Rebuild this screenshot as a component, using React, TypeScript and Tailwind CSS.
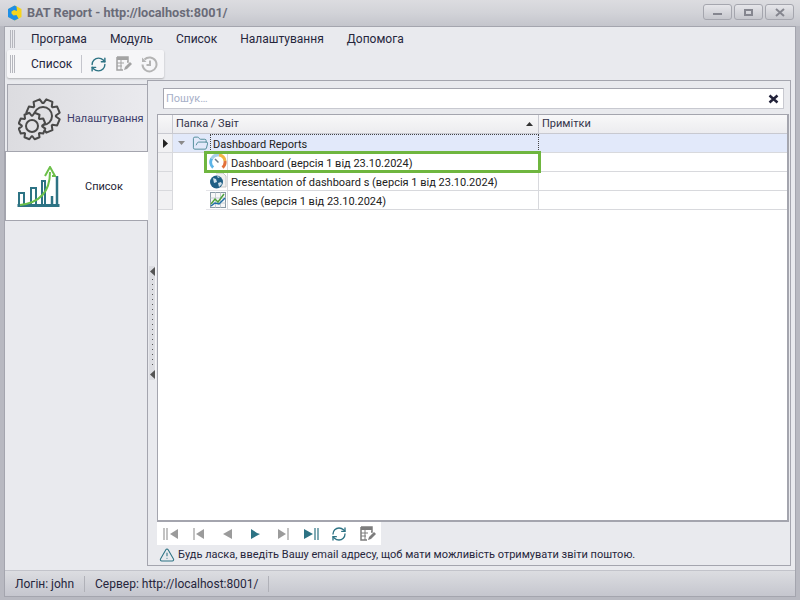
import React from "react";
import { RefreshCw, TriangleAlert, FolderOpen } from "lucide-react";

const font = { fontFamily: 'Roboto, "Open Sans", sans-serif' };

function Gear({ cx, cy, r, inner, fill = "none" }: { cx: number; cy: number; r: number; inner: number; fill?: string }) {
  const teeth = 8;
  const pts: string[] = [];
  const p = (rad: number, ang: number) => `${(cx + rad * Math.cos(ang)).toFixed(2)},${(cy + rad * Math.sin(ang)).toFixed(2)}`;
  for (let i = 0; i < teeth; i++) {
    const a = (i / teeth) * Math.PI * 2 + Math.PI / 8;
    const w = Math.PI / teeth;
    pts.push(p(r * 0.76, a - w * 0.9), p(r, a - w * 0.5), p(r, a + w * 0.5), p(r * 0.76, a + w * 0.9));
  }
  return (
    <g>
      <polygon points={pts.join(" ")} fill={fill} stroke="#4a4a4a" strokeWidth={2} strokeLinejoin="round" />
      <circle cx={cx} cy={cy} r={inner} fill="none" stroke="#4a4a4a" strokeWidth={2} />
    </g>
  );
}

function GearsIcon() {
  return (
    <svg width="44" height="44" viewBox="0 0 44 44" className="shrink-0">
      <Gear cx={25} cy={19} r={17} inner={9} />
      <Gear cx={14} cy={29} r={13.5} inner={6} fill="#e0e0e4" />
    </svg>
  );
}

function ChartIcon() {
  return (
    <svg width="44" height="42" viewBox="0 0 44 42" className="shrink-0">
      <g fill="none" stroke="#2d7384" strokeWidth="2">
        <path d="M2 38V27h5v11" />
        <path d="M14 38V22h5v16" />
        <path d="M25 38V15h3v23" />
        <path d="M40 10v28" strokeWidth="2.500" />
        <path d="M35 38V30" strokeWidth="2.500" />
      </g>
      <path d="M0.500 39.500h42" stroke="#2d7384" strokeWidth="3" />
      <path d="M3 39C20 37 33 28 33 6" fill="none" stroke="#6cc04a" strokeWidth="2" />
      <path d="M28 10L33 1l5 9h-3" fill="none" stroke="#6cc04a" strokeWidth="2" />
    </svg>
  );
}

function EditTableIcon({ color = "#a3a3a3", size = 18 }: { color?: string; size?: number }) {
  return (
    <svg width={size} height={size} viewBox="0 0 18 18">
      <path d="M2 2h11v5h-1M2 2v13h6" fill="none" stroke={color} strokeWidth="1.500" />
      <rect x="2" y="2" width="11" height="3" fill={color} />
      <path d="M2 8h7M2 11h5M6 5v10" stroke={color} strokeWidth="1" />
      <path d="M9 15l1-3 5-5 2 2-5 5z" fill={color} />
    </svg>
  );
}

function ClockIcon() {
  return (
    <svg width="17" height="17" viewBox="0 0 17 17">
      <path d="M3.500 3.500A7 7 0 1 1 1.500 8.500" fill="none" stroke="#b4b4b4" strokeWidth="2" />
      <path d="M1 1.500v4.500h4.500z" fill="#b4b4b4" />
      <path d="M9 4.500v4.500h-3.500" fill="none" stroke="#b4b4b4" strokeWidth="2" />
    </svg>
  );
}

function Logo() {
  return (
    <svg width="16" height="16" viewBox="0 0 16 16">
      <path d="M8 0.500 14.500 4v8L8 15.500 1.500 12V4z" fill="#f6d41c" />
      <path d="M7.500 0.500 1 4v8l6.500 3.500 4-2-2-3.500-3 .5L4.500 8.500v-2L7 5l3 1-.5-4.500z" fill="#1e8fe6" />
    </svg>
  );
}

function Gauge() {
  return (
    <svg width="18" height="18" viewBox="0 0 18 18">
      <path d="M4.200 14.500A7 7 0 0 1 2.800 5.500" fill="none" stroke="#5cb4e8" strokeWidth="3" />
      <path d="M2.800 5.500A7 7 0 0 1 10 2" fill="none" stroke="#a8cfe8" strokeWidth="3" />
      <path d="M10 2A7 7 0 0 1 16 8" fill="none" stroke="#f2b544" strokeWidth="3" />
      <path d="M16 8A7 7 0 0 1 13.500 14.500" fill="none" stroke="#e2703a" strokeWidth="3" />
      <path d="M6 6l3.500 3.500" stroke="#6a7a88" strokeWidth="1.500" />
    </svg>
  );
}

function Globe() {
  return (
    <svg width="18" height="18" viewBox="0 0 18 18">
      <path d="M7 1h7l3 3v11h-6" fill="#f0f0f0" stroke="#c8c8c8" />
      <circle cx="7.500" cy="10" r="6.500" fill="#1f5f85" />
      <path d="M4 6l3 1 1 3-3 1zM9 11l3-1 1 2-3 3zM8 4l3 1-2 1z" fill="#cfe0ea" />
    </svg>
  );
}

function SalesIcon() {
  return (
    <svg width="18" height="18" viewBox="0 0 18 18">
      <rect x="1.500" y="1.500" width="15" height="15" fill="#f7f7f7" stroke="#8a9aa6" />
      <path d="M1.500 7h15M1.500 12h15M6.500 1.500v15M11.500 1.500v15" stroke="#c5ccd2" strokeWidth="1" />
      <path d="M2 13l4-5 3 3 6-8" fill="none" stroke="#4ea23c" strokeWidth="1.500" />
      <path d="M2 15l4-3 4 1 6-6" fill="none" stroke="#1f6fa5" strokeWidth="1.500" />
    </svg>
  );
}

function Grip() {
  return (
    <div className="flex gap-px h-[18px] w-[5px] shrink-0">
      <div className="w-px bg-[#b5b6bd]" />
      <div className="w-px bg-[#b5b6bd]" />
      <div className="w-px bg-[#b5b6bd]" />
    </div>
  );
}

function WinBtn({ children }: { children: React.ReactNode }) {
  return (
    <div className="w-[29px] h-[16px] rounded-[3px] border border-[#a5a6ae] bg-gradient-to-b from-[#e6e6ea] to-[#c6c7cd] flex items-center justify-center">
      {children}
    </div>
  );
}

function NavBtn({ kind, active }: { kind: string; active?: boolean }) {
  const c = active ? "#2d7384" : "#9b9b9b";
  return (
    <svg width="16" height="14" viewBox="0 0 16 14">
      {kind === "first2" && <path d="M1 1v12M4 1v12" stroke={c} strokeWidth="1.200" />}
      {kind === "first2" && <path d="M15 2v10L7 7z" fill={c} />}
      {kind === "first" && <path d="M3 1v12" stroke={c} strokeWidth="1.200" />}
      {kind === "first" && <path d="M13 2v10L5 7z" fill={c} />}
      {kind === "prev" && <path d="M13 2v10L4 7z" fill={c} />}
      {kind === "next" && <path d="M4 2v10l9-5-3-1z" fill={c} />}
      {kind === "last" && <path d="M13 1v12" stroke={c} strokeWidth="1.200" />}
      {kind === "last" && <path d="M3 2v10l8-5z" fill={c} />}
      {kind === "last2" && <path d="M12 1v12M15 1v12" stroke={c} strokeWidth="1.200" />}
      {kind === "last2" && <path d="M1 2v10l9-5z" fill={c} />}
    </svg>
  );
}

function Row({ icon, text }: { icon: React.ReactNode; text: string }) {
  return (
    <div className="flex h-[19px]">
      <div className="w-[15px] shrink-0 border-r border-b border-[#d8d9dd] bg-[#f1f1f3]" />
      <div className="w-[33px] shrink-0" />
      <div className="w-[21px] shrink-0 flex items-center justify-center pl-[2px] border-b border-[#e4e4e8]">{icon}</div>
      <div className="w-[312px] shrink-0 border-l border-r border-b border-[#d8d9dd] pl-[3px] text-[11px] leading-[21px] text-[#222] whitespace-nowrap overflow-hidden">
        {text}
      </div>
      <div className="flex-1 border-b border-[#d8d9dd]" />
    </div>
  );
}

export default function App() {
  return (
    <div className="w-[800px] h-[600px] flex flex-col bg-[#b8b9c1] overflow-hidden" style={font}>
      {/* Title bar */}
      <div className="h-[26px] shrink-0 flex items-center bg-gradient-to-b from-[#dcdce0] via-[#d2d3d8] to-[#c4c5cc] pl-[7px] pr-[6px]">
        <Logo />
        <span className="ml-[4px] text-[12.7px] font-bold text-[#6a6b78]">BAT Report - http://localhost:8001/</span>
        <div className="ml-auto flex gap-[2px] -mt-[2px]">
          <WinBtn><div className="w-[9px] h-[2px] bg-[#85868f] mt-[4px]" /></WinBtn>
          <WinBtn><div className="w-[9px] h-[7px] border-2 border-[#85868f]" /></WinBtn>
          <WinBtn>
            <svg width="10" height="9" viewBox="0 0 10 9"><path d="M1 1l8 7M9 1L1 8" stroke="#85868f" strokeWidth="2" /></svg>
          </WinBtn>
        </div>
      </div>

      {/* Window body */}
      <div className="flex-1 min-h-0 mx-[4px] mb-[3px] flex flex-col border border-[#a4a5ae] bg-[#e9eaee] relative">
        {/* Menu */}
        <div className="h-[23px] shrink-0 flex items-center pl-[5px] text-[12px] text-[#26263c]">
          <Grip />
          <div className="ml-[16px] flex gap-[23px]">
            <span>Програма</span>
            <span>Модуль</span>
            <span>Список</span>
            <span>Налаштування</span>
            <span>Допомога</span>
          </div>
        </div>

        {/* Toolbar */}
        <div className="h-[31px] shrink-0 flex items-start pl-[2px]">
          <div className="h-[28px] w-[157px] flex items-center pl-[3px] bg-[#f6f6f8] rounded-[2px] shadow-[0_1px_2px_rgba(0,0,0,0.25)] text-[12px] text-[#26263c]">
            <Grip />
            <span className="ml-[16px]">Список</span>
            <div className="ml-[9px] w-px h-[18px] bg-[#c4c5cc]" />
            <div className="ml-[8px] flex items-center gap-[8px]">
              <RefreshCw size={17} color="#2d7384" strokeWidth={2} />
              <EditTableIcon />
              <ClockIcon />
            </div>
          </div>
        </div>

        {/* Main */}
        <div className="flex-1 min-h-0 flex pr-[4px] pb-[4px]">
          {/* Tabs */}
          <div className="w-[142px] shrink-0 pt-[3px] flex flex-col text-[11px]">
            <div className="ml-[2px] h-[67px] flex items-center bg-gradient-to-r from-[#dcdce0] to-[#eaeaee] border border-[#a4a5ae] border-r-0 border-b-0 pl-[10px] pt-[2px]">
              <GearsIcon />
              <span className="ml-[5px] text-[#3c3c6a] whitespace-nowrap">Налаштування</span>
            </div>
            <div className="h-[70px] -mr-[1px] relative z-10 flex items-center bg-white border-y border-l border-[#a4a5ae] pl-[11px] pt-[2px]">
              <ChartIcon />
              <span className="ml-[24px] text-[#1e1e36]">Список</span>
            </div>
            <div className="flex-1" />
          </div>

          {/* Pane */}
          <div className="flex-1 min-w-0 flex flex-col border border-[#a4a5ae] -mt-[1px]">
            <div className="h-[33px] shrink-0 pl-[15px] pr-[6px] pt-[7px]">
              <div className="h-[21px] bg-white border border-[#c8c9d0] border-t-[#a4a5ae] border-l-[#a4a5ae] flex items-center px-[2px] pt-[1px] text-[11px] text-[#a8b0c8]">
                <span>Пошук…</span>
                <svg className="ml-auto mr-[2px]" width="11" height="10" viewBox="0 0 11 10">
                  <path d="M1.500 1.500l8 7M9.500 1.500l-8 7" stroke="#23233a" strokeWidth="2.500" />
                </svg>
              </div>
            </div>
            <div className="flex-1 min-h-0 flex">
              {/* Splitter */}
              <div className="w-[9px] shrink-0 flex items-center pl-[1px]">
                <div className="w-[7px] h-[114px] -mt-[34px] bg-[#dcdde2] border-r border-[#f4f4f6] flex flex-col items-center justify-between py-[1px]">
                  <svg width="5" height="9" viewBox="0 0 5 9"><path d="M5 0v9L0 4.500z" fill="#555" /></svg>
                  <div className="flex-1 my-[3px] w-px bg-[repeating-linear-gradient(to_bottom,#555_0,#555_1px,transparent_1px,transparent_5px)]" />
                  <svg width="5" height="9" viewBox="0 0 5 9"><path d="M5 0v9L0 4.500z" fill="#555" /></svg>
                </div>
              </div>
              {/* Grid + footer */}
              <div className="flex-1 min-w-0 flex flex-col pr-[1px]">
                <div className="flex-1 min-h-0 bg-white border-l border-t border-b-2 border-r-2 border-[#a4a5ae] relative">
                  {/* Header */}
                  <div className="h-[19px] flex bg-gradient-to-b from-[#f8f8f9] to-[#ececef] border-b border-[#c8c9d0] text-[11px] text-[#33334a]">
                    <div className="w-[15px] shrink-0 border-r border-[#c8c9d0]" />
                    <div className="w-[366px] shrink-0 border-r border-[#c8c9d0] flex items-center pl-[3px]">
                      <span>Папка / Звіт</span>
                      <svg className="ml-auto mr-[5px]" width="7" height="4" viewBox="0 0 7 4"><path d="M0 4h7L3.500 0z" fill="#333" /></svg>
                    </div>
                    <div className="flex-1 flex items-center pl-[3px]">Примітки</div>
                  </div>
                  {/* Folder row */}
                  <div className="flex h-[19px] bg-[#e2e9fa] border-b border-[#d8d9dd]">
                    <div className="w-[15px] shrink-0 bg-[#f1f1f3] border-r border-[#d8d9dd] flex items-center justify-center">
                      <svg width="5" height="9" viewBox="0 0 5 9"><path d="M0 0v9l5-4.500z" fill="#222" /></svg>
                    </div>
                    <div className="w-[37px] shrink-0 flex items-center gap-[7px] pl-[5px]">
                      <svg width="7" height="4" viewBox="0 0 7 4"><path d="M0 0h7L3.500 4z" fill="#8a8a8a" /></svg>
                      <FolderOpen size={17} color="#3d7f8c" strokeWidth={1.2} className="shrink-0" />
                    </div>
                    <div className="w-[329px] shrink-0 border border-dotted border-[#444] text-[11px] leading-[19px] text-[#222] pl-[2px]">
                      Dashboard Reports
                    </div>
                    <div className="flex-1" />
                  </div>
                  <Row icon={<Gauge />} text="Dashboard (версія 1 від 23.10.2024)" />
                  <Row icon={<Globe />} text="Presentation of dashboard s (версія 1 від 23.10.2024)" />
                  <Row icon={<SalesIcon />} text="Sales (версія 1 від 23.10.2024)" />
                  {/* Highlight */}
                  <div className="absolute left-[46px] top-[36px] w-[337px] h-[22px] border-[3px] border-[#6fb63f]" />
                </div>

                {/* Nav */}
                <div className="h-[23px] shrink-0 flex">
                  <div className="w-[224px] h-full bg-white flex items-center pl-[6px] gap-[12px]">
                    <NavBtn kind="first2" />
                    <NavBtn kind="first" />
                    <NavBtn kind="prev" />
                    <NavBtn kind="next" active />
                    <NavBtn kind="last" />
                    <NavBtn kind="last2" active />
                    <RefreshCw size={16} color="#2d7384" strokeWidth={2} />
                    <EditTableIcon color="#7d7d7d" />
                  </div>
                </div>
                <div className="h-[20px] shrink-0 flex items-center pl-[2px] text-[11px] text-[#26263c]">
                  <TriangleAlert size={16} color="#2d7384" strokeWidth={1.6} />
                  <span className="ml-[3px]">Будь ласка, введіть Вашу email адресу, щоб мати можливість отримувати звіти поштою.</span>
                </div>
              </div>
            </div>
          </div>
        </div>

        {/* Status bar */}
        <div className="h-[26px] shrink-0 flex items-center bg-gradient-to-b from-[#dcdde1] to-[#c5c6ce] border-t border-[#c2c3ca] text-[12px] text-[#26263c] pl-[10px]">
          <span>Логін: john</span>
          <div className="mx-[10px] w-px h-[16px] bg-[#b0b1b8]" />
          <span>Сервер: http://localhost:8001/</span>
          <div className="ml-[10px] w-px h-[16px] bg-[#b0b1b8]" />
        </div>
      </div>
    </div>
  );
}
